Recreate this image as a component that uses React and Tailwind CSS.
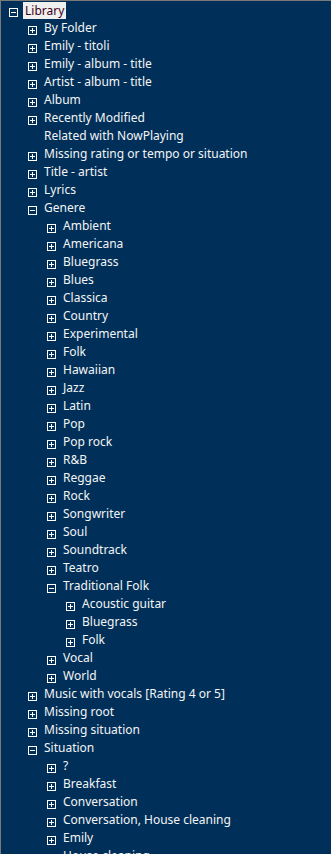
import React from "react";

const rows = [
  [0, "Library", "minus", true],
  [1, "By Folder", "plus"],
  [1, "Emily - titoli", "plus"],
  [1, "Emily - album - title", "plus"],
  [1, "Artist - album - title", "plus"],
  [1, "Album", "plus"],
  [1, "Recently Modified", "plus"],
  [1, "Related with NowPlaying", "none"],
  [1, "Missing rating or tempo or situation", "plus"],
  [1, "Title - artist", "plus"],
  [1, "Lyrics", "plus"],
  [1, "Genere", "minus"],
  [2, "Ambient", "plus"],
  [2, "Americana", "plus"],
  [2, "Bluegrass", "plus"],
  [2, "Blues", "plus"],
  [2, "Classica", "plus"],
  [2, "Country", "plus"],
  [2, "Experimental", "plus"],
  [2, "Folk", "plus"],
  [2, "Hawaiian", "plus"],
  [2, "Jazz", "plus"],
  [2, "Latin", "plus"],
  [2, "Pop", "plus"],
  [2, "Pop rock", "plus"],
  [2, "R&B", "plus"],
  [2, "Reggae", "plus"],
  [2, "Rock", "plus"],
  [2, "Songwriter", "plus"],
  [2, "Soul", "plus"],
  [2, "Soundtrack", "plus"],
  [2, "Teatro", "plus"],
  [2, "Traditional Folk", "minus"],
  [3, "Acoustic guitar", "plus"],
  [3, "Bluegrass", "plus"],
  [3, "Folk", "plus"],
  [2, "Vocal", "plus"],
  [2, "World", "plus"],
  [1, "Music with vocals [Rating 4 or 5]", "plus"],
  [1, "Missing root", "plus"],
  [1, "Missing situation", "plus"],
  [1, "Situation", "minus"],
  [2, "?", "plus"],
  [2, "Breakfast", "plus"],
  [2, "Conversation", "plus"],
  [2, "Conversation, House cleaning", "plus"],
  [2, "Emily", "plus"],
  [2, "House cleaning", "plus"],
];

const indent = {
  0: "pl-[8px]",
  1: "pl-[27px]",
  2: "pl-[46px]",
  3: "pl-[65px]",
};

function Box({ kind }) {
  if (kind === "none") return <div className="w-[9px] h-[9px] shrink-0" />;
  return (
    <svg width="9" height="9" viewBox="0 0 9 9" className="shrink-0 block" shapeRendering="crispEdges">
      <rect x="0.5" y="0.5" width="8" height="8" fill="none" stroke="#ffffff" strokeWidth="1" />
      <line x1="2" y1="4.5" x2="7" y2="4.5" stroke="#ffffff" strokeWidth="1" />
      {kind === "plus" && <line x1="4.5" y1="2" x2="4.5" y2="7" stroke="#ffffff" strokeWidth="1" />}
    </svg>
  );
}

export default function App() {
  return (
    <div
      className="w-[331px] h-[854px] overflow-hidden bg-[#00305a] border-t border-l border-[#7a7a7a] text-[12px] text-[#f4f4f4]"
      style={{ fontFamily: '"Noto Sans", "Segoe UI", sans-serif' }}
    >
      {rows.map(([lvl, label, kind, sel], i) => (
        <div key={i} className={`h-[18px] flex items-start ${indent[lvl]}`}>
          <div className="mt-[7px]">
            <Box kind={kind} />
          </div>
          {sel ? (
            <div className="ml-[5px] mt-[1px] h-[17px] px-[2px] bg-[#f0f0f0] text-[#3c0018] leading-[17px] whitespace-nowrap">
              {label}
            </div>
          ) : (
            <div className="ml-[7px] leading-[18px] whitespace-nowrap">{label}</div>
          )}
        </div>
      ))}
    </div>
  );
}
